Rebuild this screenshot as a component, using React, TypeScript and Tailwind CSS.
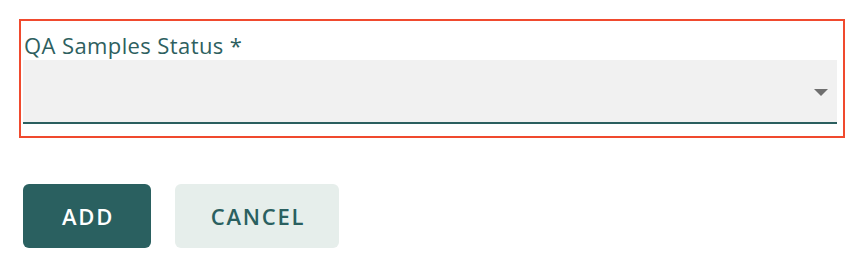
import React from "react";

export default function App() {
  return (
    <div className="w-[856px] h-[266px] bg-white pt-[19px] pl-[19px]" style={{ fontFamily: "'Open Sans', Lato, sans-serif" }}>
      <div className="w-[826px] h-[119px] border-2 border-[#f04a2e] pl-[2px] pr-[6px] pt-[9px] flex flex-col">
        <label className="text-[22px] leading-[30px] tracking-[0.4px] text-[#2e5f60] pl-[1px]">QA Samples Status *</label>
        <div className="h-[64px] bg-[#f1f1f1] border-b-2 border-[#2b5f5f] flex items-center justify-end pr-[9px]">
          <svg width="14" height="7" viewBox="0 0 14 7" className="mt-[2px]">
            <path d="M0 0 L14 0 L7 7 Z" fill="#6f6f6f" />
          </svg>
        </div>
      </div>
      <div className="flex gap-[24px] mt-[46px] pl-[4px]">
        <button className="w-[128px] h-[64px] rounded-[6px] bg-[#2a6060] text-white text-[22px] font-semibold tracking-[1.8px] pl-[2px]">ADD</button>
        <button className="w-[164px] h-[64px] rounded-[6px] bg-[#e6eeeb] text-[#2a6060] text-[22px] font-semibold tracking-[1.8px] pl-[2px]">CANCEL</button>
      </div>
    </div>
  );
}
